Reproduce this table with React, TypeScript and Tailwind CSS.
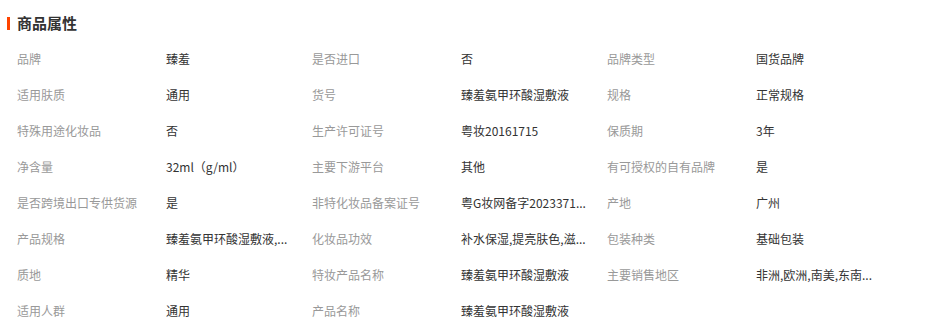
const ROWS: [string, string][] = [
  ["品牌", "臻羞"],
  ["是否进口", "否"],
  ["品牌类型", "国货品牌"],
  ["适用肤质", "通用"],
  ["货号", "臻羞氨甲环酸湿敷液"],
  ["规格", "正常规格"],
  ["特殊用途化妆品", "否"],
  ["生产许可证号", "粤妆20161715"],
  ["保质期", "3年"],
  ["净含量", "32ml（g/ml）"],
  ["主要下游平台", "其他"],
  ["有可授权的自有品牌", "是"],
  ["是否跨境出口专供货源", "是"],
  ["非特化妆品备案证号", "粤G妆网备字2023371..."],
  ["产地", "广州"],
  ["产品规格", "臻羞氨甲环酸湿敷液,..."],
  ["化妆品功效", "补水保湿,提亮肤色,滋..."],
  ["包装种类", "基础包装"],
  ["质地", "精华"],
  ["特妆产品名称", "臻羞氨甲环酸湿敷液"],
  ["主要销售地区", "非洲,欧洲,南美,东南..."],
  ["适用人群", "通用"],
  ["产品名称", "臻羞氨甲环酸湿敷液"],
];

export default function App() {
  return (
    <div className="w-[931px] h-[333px] bg-white overflow-hidden font-['Noto_Sans_CJK_SC','Liberation_Sans',sans-serif]">
      <div className="flex items-center h-[24px] mt-[11px] pl-[7px]">
        <span className="w-[3px] h-[13px] bg-[#ff4400]" />
        <span className="ml-[7px] text-[15px] font-bold text-[#333] leading-[20px]">商品属性</span>
      </div>
      <div className="grid grid-cols-[295px_295px_295px] pl-[17px] mt-[6px]">
        {ROWS.map(([label, value]) => (
          <div key={label} className="flex items-center h-[36px] text-[12px] leading-[18px]">
            <span className="w-[149px] shrink-0 text-[#999]">{label}</span>
            <span className="w-[130px] whitespace-nowrap text-[#333]">{value}</span>
          </div>
        ))}
      </div>
    </div>
  );
}
